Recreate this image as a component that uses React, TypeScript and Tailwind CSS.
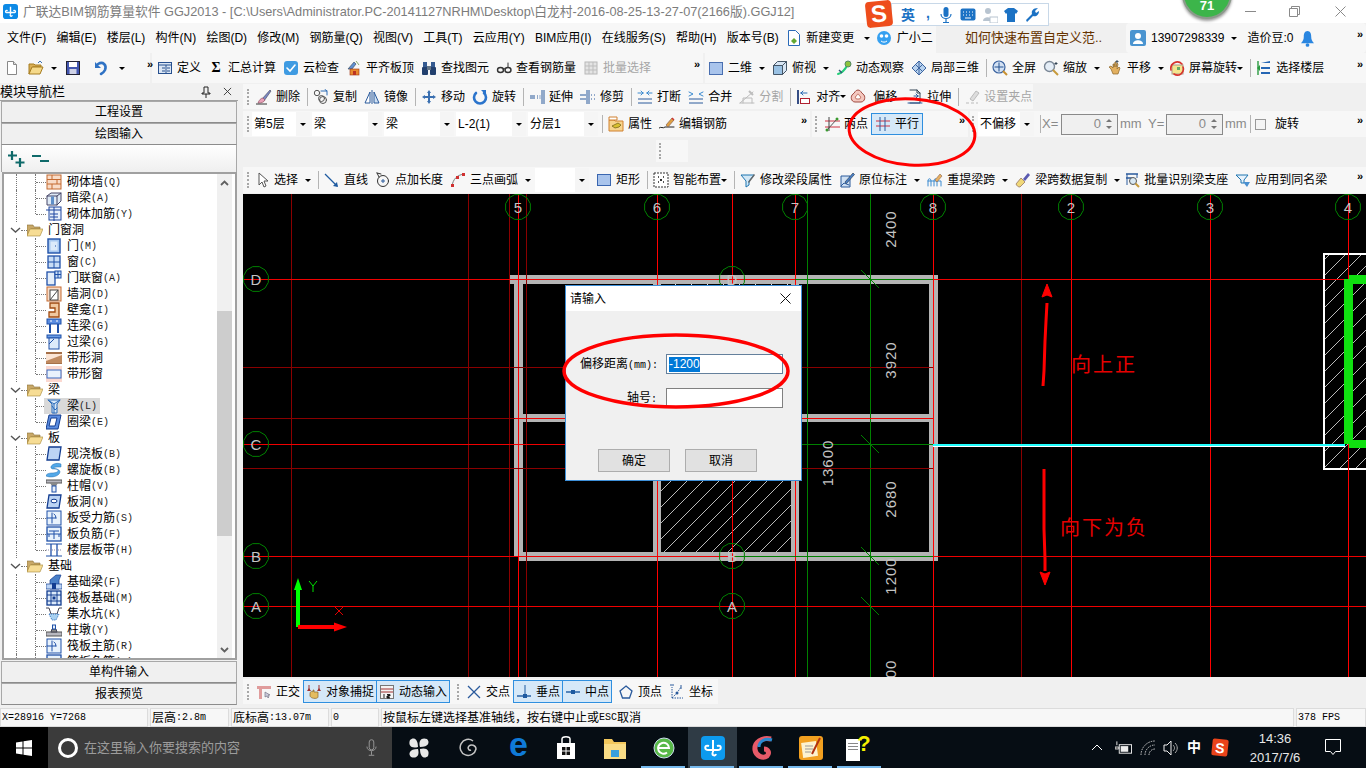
import type { ReactNode } from "react"

const L = { fill: "none", strokeLinecap: "round" as const }

const ICONS: Record<string, ReactNode> = {
  // main toolbar
  new: <><path d="M3.5 1.5h6l3 3v10h-9z" fill="#fff" stroke="#888" /><path d="M9.5 1.5v3h3" fill="#ddd" stroke="#888" /></>,
  open: <><path d="M1 4h5l1 1h6v2H5l-4 7z" fill="#d9ae55" stroke="#a67c20" /><path d="M1 14l3-7h11l-3 7z" fill="#f5d98a" stroke="#a67c20" /><path d="M10 3l2-2 2 2" stroke="#3a70b0" fill="none" /></>,
  save: <><rect x="1.5" y="1.5" width="13" height="13" fill="#4356b0" stroke="#223" /><rect x="4" y="2" width="8" height="5" fill="#fff" /><rect x="4.5" y="9" width="7" height="5" fill="#cfd2e6" /></>,
  undo: <><path d="M4 4c5-3 9 1 7 6-1 2-2 3-4 4" {...L} stroke="#2f72c4" strokeWidth="2.6" /><path d="M1 2v6h6z" fill="#2f72c4" /></>,
  define: <><rect x="1.5" y="2.5" width="13" height="11" fill="#dbe6f4" stroke="#27508f" /><path d="M2 5h12M9 5v8M5 8h3M5 11h3M10 8h3M10 11h3" stroke="#27508f" /></>,
  cloud: <><rect x="1" y="1" width="14" height="14" rx="3" fill="#3f9be2" /><path d="M4 8l3 3 5-6" {...L} stroke="#fff" strokeWidth="1.6" /></>,
  flush: <><path d="M2 9l6-7 2 2-4 5z" fill="#5f8fd0" stroke="#345" strokeWidth=".6" /><rect x="4" y="9" width="9" height="6" fill="#e88a30" stroke="#a03010" strokeWidth=".6" /><path d="M10 1l3 4" stroke="#8a6" /><rect x="7" y="11" width="3" height="4" fill="#b32" /></>,
  find: <><rect x="2" y="2" width="4" height="5" fill="#345a90" /><rect x="10" y="2" width="4" height="5" fill="#345a90" /><rect x="1" y="7" width="6" height="8" rx="1" fill="#22406e" /><rect x="9" y="7" width="6" height="8" rx="1" fill="#22406e" /><rect x="6" y="6" width="4" height="4" fill="#678" /></>,
  look: <><ellipse cx="4.5" cy="10" rx="3" ry="2.5" {...L} stroke="#333" strokeWidth="1.4" /><ellipse cx="12" cy="10" rx="3" ry="2.5" {...L} stroke="#333" strokeWidth="1.4" /><path d="M7 9c1-1 2-1 2 0M12 7V3" {...L} stroke="#333" /></>,
  batch: <><rect x="2" y="2" width="12" height="12" fill="#e4e4e4" stroke="#b8b8b8" /><path d="M2 6h12M2 10h12M6 2v12M10 2v12" stroke="#bdbdbd" /></>,
  d2: <rect x="1.5" y="2.5" width="13" height="12" fill="#a9c4ec" stroke="#4a6fb0" />,
  top: <><path d="M1.5 5.5l4-4h9v9l-4 4h-9z" fill="#d8e6f4" stroke="#456" /><path d="M1.5 5.5h9v9M10.5 5.5l4-4" {...L} stroke="#456" /><rect x="2" y="6" width="8" height="8" fill="#7fb0dc" opacity=".7" /></>,
  orbit: <><path d="M2 14c4-1 8-6 10-10" {...L} stroke="#2c7" strokeWidth="2" /><circle cx="12" cy="4" r="3" fill="#8cc43c" stroke="#586" /><path d="M3 10l3 3" stroke="#357" strokeWidth="1.4" /></>,
  local3d: <><path d="M8 1l7 7-7 7-7-7z" fill="#b8d2ee" stroke="#3c64a0" /><path d="M4.5 4.5l7 7M11.5 4.5l-7 7M8 1v14" stroke="#3c64a0" /></>,
  full: <><circle cx="7" cy="7" r="6" fill="#d4e2f4" stroke="#3c64a0" strokeWidth="1.2" /><path d="M7 2.5v9M2.5 7h9" stroke="#23508f" /><path d="M11 11l4 4" stroke="#c89030" strokeWidth="2" /></>,
  zoom: <><circle cx="6.5" cy="6.5" r="5" fill="#e4edf6" stroke="#7a8796" strokeWidth="1.4" /><path d="M10 10l5 5" stroke="#c79a3c" strokeWidth="2" /><path d="M13 2v3M11.5 3.5h3" stroke="#345" /></>,
  pan: <><path d="M4 9l-2-2 2-1 2 2V4l1 0v3l1-5 1 0v5l1-4 1 1-1 5 2-2 1 1-2 6H6z" fill="#e2b060" stroke="#8a6428" strokeWidth=".7" /><path d="M10 0v3M8.5 1.5h3" stroke="#456" /></>,
  spin: <><rect x="3" y="5" width="11" height="9" fill="#f5e58e" stroke="#a98" /><path d="M2 10a6.500 6.500 0 0 1 11-6" {...L} stroke="#d8322c" strokeWidth="1.6" /><path d="M14 7a6 6 0 0 1-9 7" {...L} stroke="#d8322c" strokeWidth="1.6" /><rect x="8" y="7" width="3" height="3" fill="#6a6" /></>,
  floors: <><path d="M5 3l9-2v2H5zM5 7h9v2H5zM5 12h9v2H5z" fill="#2566b4" /><path d="M1 8l3-3v6z" fill="#2a9a40" /><path d="M2 1v14" stroke="#2a9a40" strokeWidth="1.4" /></>,
  // edit toolbar
  del: <><path d="M6 10L14 1l1 1-7 10z" fill="#7a88c4" stroke="#445" strokeWidth=".6" /><path d="M2 14c1-3 3-5 5-5l2 2c-1 2-3 3-7 3z" fill="#e8a0b8" stroke="#845" strokeWidth=".6" /><path d="M0 15h11" stroke="#333" /></>,
  copy: <><circle cx="4" cy="4" r="2.7" {...L} stroke="#555" /><circle cx="10" cy="11" r="3.5" {...L} stroke="#555" /><circle cx="8.500" cy="9.500" r="3" {...L} stroke="#555" /><path d="M8 2h6l-2-1.500M14 2v4" {...L} stroke="#2f6db5" /></>,
  mirror: <><path d="M1 14L6 3v11z" fill="#fff" stroke="#2a5a9c" /><path d="M15 14L10 3v11z" fill="#cfe0f2" stroke="#2a5a9c" /><path d="M8 1v14" stroke="#2a5a9c" /></>,
  move: <path d="M8 1l2 3H9v3h3V6l3 2-3 2V9H9v3h1l-2 3-2-3h1V9H4v1L1 8l3-2v1h3V4H6z" fill="#3a6fb0" />,
  rotate: <><path d="M4 4a6 6 0 1 0 8 0" {...L} stroke="#2b74cc" strokeWidth="2.600" /><path d="M9 1h5v5z" fill="#2b74cc" /></>,
  extend: <><path d="M13 1v14M15 1v14" stroke="#2a5a9c" /><path d="M1 7h5M1 9h5M8 7h1M8 9h1M10.500 7h1M10.500 9h1" stroke="#2a5a9c" /></>,
  trim: <><path d="M7 1v14M9 1v14" stroke="#2a5a9c" /><path d="M0 6h6M0 10h6M11 6h1M11 10h1M14 6h1M14 10h1" stroke="#2a5a9c" /></>,
  break: <><path d="M1 10h14M1 14h14" stroke="#2a5a9c" /><path d="M1 4h5M6 4L4 2M6 4L4 6M15 4h-5M10 4l2-2M10 4l2 2" {...L} stroke="#3a8ad0" /></>,
  merge: <><path d="M1 10h14M1 14h14" stroke="#2a5a9c" /><path d="M1 3l4 2-4 2M15 3l-4 2 4 2" {...L} stroke="#3a8ad0" /></>,
  split: <><path d="M1 14L14 3M1 14h14M4 14V9h9v5" {...L} stroke="#bcbcbc" /><path d="M10 2l4 4" stroke="#bcbcbc" strokeWidth="2" /></>,
  align: <><path d="M2 1v14" stroke="#203a78" strokeWidth="1.800" /><path d="M5 4h6M5 4l2-2M5 4l2 2" {...L} stroke="#2a6ab4" /><rect x="4.500" y="9.500" width="9" height="5" fill="#fff" stroke="#b02030" /></>,
  offset: <><path d="M8 1c3 0 3 3 5 4 3 2 2 8-2 8H5c-4 0-5-6-2-8 2-1 2-4 5-4z" fill="#f4c8c0" stroke="#a04a40" /><path d="M8 5c1 0 1 2 2 2 1 1 1 3-1 3H7c-2 0-2-2-1-3 1 0 1-2 2-2z" fill="#fff" stroke="#c07060" /></>,
  stretch: <><path d="M3 1h7l3 3v10H3" {...L} stroke="#345" /><path d="M1 14h14M7 7h4M11 7l-2-2M11 7l-2 2" {...L} stroke="#2a5a9c" /><path d="M10 1v3h3" {...L} stroke="#345" /></>,
  grip: <><path d="M2 14h3M7 14h3M12 14h2" stroke="#bbb" /><path d="M6 10l6-8 3 2-6 8z" fill="#ddd" stroke="#bbb" /></>,
  prop: <><path d="M1 4h5l1 1h8v10H1z" fill="#f7d48c" stroke="#d08030" /><path d="M1 1h8v3H1z" fill="#fff" stroke="#d08030" /><path d="M4 10l6-3 3 2-2 2-4 1z" fill="#d8c030" stroke="#6a5a10" strokeWidth=".7" /></>,
  editbar: <><path d="M0 12c2-2 4 1 6-1h9" {...L} stroke="#222" /><path d="M7 9l6-7 2 2-6 7z" fill="#e0a040" stroke="#865" strokeWidth=".7" /><path d="M13 2l2 2" stroke="#c33" strokeWidth="1.400" /></>,
  twopt: <><path d="M1 5h15M1 11h15" stroke="#d03040" /><path d="M3 14L13 3" stroke="#555" /><circle cx="3" cy="14" r="1.500" fill="#3a9a30" /><circle cx="13" cy="3" r="1.500" fill="#3a9a30" /><path d="M5 1v14" stroke="#444" /></>,
  para: <><path d="M1 5h14M1 10h14" stroke="#d03040" /><path d="M5 1v14M10 1v14" stroke="#2a5a9c" /></>,
  // draw toolbar
  pick: <path d="M3 1v12l3-3 2 5 2-1-2-5h4z" fill="#fff" stroke="#555" />,
  line: <><path d="M1 2l12 12" stroke="#1e5aa0" strokeWidth="1.200" /><path d="M14 15l-5-1 4-4z" fill="#1e5aa0" /></>,
  ptlen: <><circle cx="8" cy="9" r="5.500" {...L} stroke="#333" /><path d="M8 7v4M6 9h4" stroke="#2a5a9c" /><path d="M2 1l2 4M2 1l4 1" {...L} stroke="#333" /></>,
  arc: <><path d="M2 14C3 7 7 3 14 2" {...L} stroke="#777" /><rect x="1" y="12" width="3" height="3" fill="#d03030" /><rect x="6" y="4" width="3" height="3" fill="#d03030" /><rect x="12" y="1" width="3" height="3" fill="#d03030" /></>,
  rect: <rect x="1.500" y="2.500" width="13" height="11" fill="#a9c4ec" stroke="#3a66b0" />,
  smart: <><rect x="1" y="1" width="14" height="14" fill="#fff" stroke="#333" strokeDasharray="2 1" /><path d="M5 5h1M10 5h1M5 10h1M10 10h1M8 7v2M7 8h2" stroke="#222" strokeWidth="1.400" /></>,
  modseg: <><path d="M1 3h13l-5 6v4l-3 2V9z" fill="#d3e8f6" stroke="#1d74b0" /><path d="M8 10l6-8 1 1-6 8z" fill="#666" /></>,
  inplace: <><path d="M2 4h9v11H2z" fill="#cfe0f2" stroke="#2a5a9c" /><path d="M2 14l3-3 5 2" {...L} stroke="#2a5a9c" /><path d="M6 10l8-9 1.500 1.500-8 9z" fill="#4a80c8" stroke="#234" strokeWidth=".6" /></>,
  relift: <><path d="M1 14V9c0-3 3-3 3 0v5M7 14V9c0-3 3-3 3 0v5M1 9h13v5" {...L} stroke="#3a8ad0" /><path d="M8 8l5-6 2 2-5 6z" fill="#e8b060" stroke="#865" strokeWidth=".6" /></>,
  brush: <><path d="M1 12l5-6 4 4-5 5c-2 0-3-1-4-3z" fill="#f0d878" stroke="#865" strokeWidth=".7" /><path d="M8 7l5-6 2 2-5 6z" fill="#5a5ab0" /></>,
  batchid: <><path d="M2 2h12M2 6h6" stroke="#2a5a9c" strokeWidth="1.400" /><path d="M3 2v11M13 2v4" stroke="#2a5a9c" /><circle cx="9" cy="9" r="3.500" fill="#d8e8f4" stroke="#555" /><path d="M11.500 11.500l3.500 3.500" stroke="#c79a3c" strokeWidth="2" /></>,
  apply: <><path d="M1 3h12l-4 5v3H6V8z" fill="#e8f2fb" stroke="#1d74b0" /><path d="M8 10h7l-3 5z" fill="#4a90d0" /></>,
  // bottom toolbar
  ortho: <><path d="M1 2h14v3H1zM3 5h3v10H3z" fill="#e09c9c" /><path d="M9 8v5l2-1 1 2 1-1-1-2h2z" fill="#ccd" stroke="#667" strokeWidth=".6" /></>,
  snap: <><path d="M3 1v6M13 1v6" stroke="#a03030" /><path d="M1 7h4L3 4zM11 7h4l-2-3z" fill="#a03030" /><path d="M4 10c0-3 2-3 3-2V6h1v2h4v5c0 2-7 2-8-1z" fill="#e4bc60" stroke="#8a6428" strokeWidth=".7" /></>,
  dyn: <><rect x="1.500" y="1.500" width="13" height="13" fill="#f4f4f4" stroke="#777" /><path d="M2 5h12M2 8h12" stroke="#a03030" /><path d="M5 10v4M8 10.500h3v1.500H8V14h3" stroke="#222" /></>,
  cross: <path d="M2 2l12 12M14 2L2 14" stroke="#2a5a9c" strokeWidth="1.300" />,
  perp: <><path d="M1 12h14" stroke="#1e5aa0" strokeWidth="1.400" /><path d="M9 1v11" stroke="#1e5aa0" /><rect x="7" y="10" width="4" height="4" fill="#1e5aa0" /></>,
  mid: <><path d="M1 8h14" stroke="#1e5aa0" strokeWidth="1.400" /><rect x="6" y="6" width="4" height="4" fill="#1e5aa0" /></>,
  vertex: <path d="M8 2l6 5-2.500 7h-7L2 7z" fill="none" stroke="#2a5a9c" strokeWidth="1.300" />,
  coord: <><path d="M3 14L3 3M3 14h11M3 14l5-5M8 9l4-6" stroke="#2a5a9c" strokeDasharray="1.500 1" /><circle cx="8" cy="9" r="1.500" fill="#2a5a9c" /><path d="M1 1h4M12 1v4" stroke="#2a5a9c" /></>,
}

const TREE_ICONS: Record<string, ReactNode> = {
  brick: <><rect x="1" y="1" width="14" height="14" fill="#f8dcc8" stroke="#c46a30" /><path d="M1 5.500h14M1 10h14M6 1v4.500M11 5.500V10M6 10v5" stroke="#c46a30" /></>,
  hidden: <><path d="M1 6l4-3h10v8l-4 4H1z" fill="#dfeaf6" stroke="#446" /><path d="M1 6h10v9M11 6l4-3" {...L} stroke="#446" /><rect x="5" y="6.500" width="3" height="8" fill="#5f8fc8" /></>,
  rebar: <><rect x="3" y="1" width="12" height="13" fill="#e8f0fa" stroke="#1f46a0" /><path d="M0 4h15M8 1v14M4 8h8M4 11h8" stroke="#1f46a0" /></>,
  door: <><rect x="2" y="1" width="12" height="14" fill="#a8c8f0" stroke="#1f50a8" strokeWidth="1.400" /><rect x="4.500" y="3.500" width="7" height="9" fill="#dceafa" /><path d="M9 8h1" stroke="#1f50a8" /></>,
  win: <><rect x="2" y="2" width="12" height="12" fill="#c8ddf6" stroke="#1f50a8" strokeWidth="1.300" /><path d="M8 2v12M2 8h12" stroke="#1f50a8" /></>,
  doorwin: <><rect x="1" y="2" width="8" height="13" fill="#e4eefa" stroke="#1f50a8" strokeWidth="1.300" /><rect x="9" y="1" width="6" height="7" fill="#c8ddf6" stroke="#1f50a8" /><path d="M12 1v7M9 4.500h6" stroke="#1f50a8" /></>,
  hole: <><rect x="1" y="1" width="14" height="14" fill="#f8dcc8" stroke="#c46a30" /><rect x="4" y="4" width="8" height="10" fill="#fff" stroke="#444" /><path d="M4 14l8-10" stroke="#444" /></>,
  niche: <path d="M4 1h9v14H3v-5h6V6H4z" fill="#f0c8a0" stroke="#a04a10" strokeWidth="1.300" />,
  lian: <><rect x="1" y="1" width="14" height="5" fill="#5a8ce0" stroke="#1f50a8" /><path d="M4 6v9M12 6v9" stroke="#1f50a8" strokeWidth="2" /><path d="M4 3h2M10 3h2" stroke="#fff" /></>,
  guo: <><rect x="1" y="1" width="14" height="3" fill="#6a9ce6" stroke="#1f50a8" /><rect x="3" y="4" width="10" height="11" fill="#dceafa" stroke="#1f50a8" /><path d="M3 10l5-5" stroke="#1f50a8" /></>,
  band: <><rect x="0" y="2" width="16" height="12" fill="#fbe4d4" /><path d="M0 3h16M0 13h16" stroke="#8a4a1a" strokeWidth="1.300" /><path d="M0 11l16-6v8H0z" fill="#c08a60" /></>,
  bandwin: <><rect x="0" y="0" width="16" height="16" fill="#fbd8d0" /><rect x="1" y="4" width="14" height="8" fill="#eaf2fc" stroke="#3a6ac0" /></>,
  beam: <><path d="M2 2h12l-3 4v9H6V6z" fill="#d8e8f8" stroke="#2a6ab8" /><path d="M2 2l6 4 6-4M8 6v9" {...L} stroke="#2a6ab8" /><path d="M6 8l3 4 2-2" {...L} stroke="#2a6ab8" /></>,
  ring: <><path d="M3 1h12l-3 14H0z" fill="#5a8ce0" stroke="#123c90" /><path d="M5 4h6l-2 8H3z" fill="#fff" stroke="#123c90" /></>,
  slab: <path d="M3 1h12l-2 13H1z" fill="#bcd4f4" stroke="#123c90" strokeWidth="1.300" />,
  spiral: <path d="M15 2C10 0 4 3 5 6c1 2 6 0 7 2s-3 3-6 3C3 11 0 12 0 14c4 2 13 1 14-4 0-3-5-3-6-4s3-1 7-1z" fill="#52a8e8" stroke="#2a70b0" strokeWidth=".5" />,
  cap: <><rect x="0" y="2" width="16" height="3" fill="#b8b8c0" stroke="#555" /><path d="M4 5h8l-2 3H6z" fill="#888" /><rect x="6" y="8" width="4" height="6" fill="#e8f0fa" stroke="#1f50a8" /></>,
  slabhole: <><path d="M3 1h12l-2 13H1z" fill="#bcd4f4" stroke="#123c90" strokeWidth="1.300" /><ellipse cx="8" cy="7" rx="3" ry="1.800" fill="#fff" stroke="#123c90" /></>,
  force: <><rect x="1" y="1" width="14" height="14" fill="#e8f2fc" stroke="#1f50a8" /><path d="M1 8h9M10 8a3 4 0 0 0-2-4M6 3v10" {...L} stroke="#1f50a8" /></>,
  neg: <><rect x="1" y="1" width="14" height="14" fill="#e8f2fc" stroke="#1f50a8" strokeWidth="1.300" /><path d="M1 8h14M3 5h10M8 5v8M3 8v3M13 8v3" stroke="#1f50a8" /></>,
  strip: <><path d="M0 2h16M0 14h16" stroke="#1f50a8" /><path d="M5 2v12M11 2v12" stroke="#1f50a8" strokeWidth="1.300" /><path d="M0 8h16" stroke="#88a" strokeDasharray="1 1" /></>,
  fbeam: <><path d="M4 15V6l6-5 5 0-2 5v9z" fill="#4a80c8" stroke="#123c90" strokeWidth=".7" /><path d="M0 15V10h16v5z" fill="#bcd4f4" stroke="#123c90" strokeWidth=".7" /><path d="M6 15V9h4v6z" fill="#123c90" /></>,
  raft: <><rect x="1" y="1" width="14" height="14" fill="#dceafa" stroke="#123c90" strokeWidth="1.300" /><path d="M1 5h14M1 11h14M5 1v14M11 1v14" stroke="#123c90" /><rect x="6.500" y="6.500" width="3" height="3" fill="#123c90" /></>,
  pit: <><path d="M0 2h3l2 6h6l2-6h3" {...L} stroke="#445" /><path d="M3 8h10l-3 6H6z" fill="#a8d0f0" stroke="#2a6ab8" strokeDasharray="1 1" /></>,
  pier: <><rect x="0" y="10" width="16" height="4" fill="#b8b8c0" stroke="#555" /><path d="M5 10l1-3h4l1 3z" fill="#888" stroke="#445" /><rect x="6.500" y="3" width="3" height="4" fill="#e8f0fa" stroke="#1f50a8" /></>,
}

function Ic({ n }: { n: string }) {
  return (
    <svg viewBox="0 0 16 16" className="w-4 h-4 shrink-0">
      {ICONS[n]}
    </svg>
  )
}

function Dd({ tight }: { tight?: boolean }) {
  return <div className={`w-0 h-0 shrink-0 border-t-[3px] border-x-[3px] border-t-black border-x-transparent ${tight ? "-ml-[7px]" : ""}`} />
}

function Tool({ n, t, off, dd, tight }: { n: string; t: string; off?: boolean; dd?: boolean; tight?: boolean }) {
  return (
    <>
      <div className={`flex items-center gap-1 whitespace-nowrap ${off ? "text-[#a6a6a6]" : ""}`}>
        <Ic n={n} />
        <span>{t}</span>
      </div>
      {dd && <Dd tight={tight} />}
    </>
  )
}

function Sep() {
  return <div className="w-px h-[18px] bg-[#b4b4b4] -mr-[2px] shrink-0" />
}

function Handle() {
  return <div className="w-[2px] h-[16px] border-l-2 border-dotted border-[#a8a8a8] shrink-0" />
}

function More() {
  return <span className="text-[11px] leading-none font-bold text-black tracking-[-1px] -translate-y-1 inline-block">»</span>
}

function Combo({ t, w }: { t: string; w: string }) {
  return (
    <div className={`flex h-[24px] bg-white items-center justify-between pl-[2px] shrink-0 ${w}`}>
      <span>{t}</span>
      <div className="w-[14px] h-full bg-[#f5f5f5] flex items-center justify-center">
        <Dd />
      </div>
    </div>
  )
}

function Spin() {
  return (
    <div className="flex items-center justify-end w-[57px] h-[21px] border border-[#8a8a8a] bg-[#f0f0f0] text-[#8a8a8a] shrink-0">
      <span className="text-[13px]">0</span>
      <div className="w-[16px] flex flex-col items-center gap-[4px]">
        <div className="w-0 h-0 border-b-[3px] border-x-[3px] border-b-[#777] border-x-transparent" />
        <div className="w-0 h-0 border-t-[3px] border-x-[3px] border-t-[#777] border-x-transparent" />
      </div>
    </div>
  )
}

type Row = { p?: string; t?: string; k?: string; i?: string; last?: boolean; sel?: boolean }

const TREE: Row[] = [
  { t: "砌体墙", k: "Q", i: "brick" },
  { t: "暗梁", k: "A", i: "hidden" },
  { t: "砌体加筋", k: "Y", i: "rebar", last: true },
  { p: "门窗洞" },
  { t: "门", k: "M", i: "door" },
  { t: "窗", k: "C", i: "win" },
  { t: "门联窗", k: "A", i: "doorwin" },
  { t: "墙洞", k: "D", i: "hole" },
  { t: "壁龛", k: "I", i: "niche" },
  { t: "连梁", k: "G", i: "lian" },
  { t: "过梁", k: "G", i: "guo" },
  { t: "带形洞", i: "band" },
  { t: "带形窗", i: "bandwin", last: true },
  { p: "梁" },
  { t: "梁", k: "L", i: "beam", sel: true },
  { t: "圈梁", k: "E", i: "ring", last: true },
  { p: "板" },
  { t: "现浇板", k: "B", i: "slab" },
  { t: "螺旋板", k: "B", i: "spiral" },
  { t: "柱帽", k: "V", i: "cap" },
  { t: "板洞", k: "N", i: "slabhole" },
  { t: "板受力筋", k: "S", i: "force" },
  { t: "板负筋", k: "F", i: "neg" },
  { t: "楼层板带", k: "H", i: "strip", last: true },
  { p: "基础" },
  { t: "基础梁", k: "F", i: "fbeam" },
  { t: "筏板基础", k: "M", i: "raft" },
  { t: "集水坑", k: "K", i: "pit" },
  { t: "柱墩", k: "Y", i: "pier" },
  { t: "筏板主筋", k: "R", i: "force" },
  { t: "筏板负筋", k: "F", i: "neg" },
]

function TreeRow({ r }: { r: Row }) {
  if (r.p) {
    return (
      <div className="flex h-4 items-center">
        <div className="w-[6px]" />
        <svg viewBox="0 0 11 6" className="w-[11px] h-[6px] shrink-0">
          <path d="M1 1l4.500 4L10 1" fill="none" stroke="#555" strokeWidth="1.400" />
        </svg>
        <div className="w-[6px] border-t border-dotted border-[#777]" />
        <svg viewBox="0 0 16 16" className="w-4 h-4 shrink-0">
          <path d="M0 3h6l1 2h6v2H4l-4 7z" fill="#c8a868" stroke="#8a7038" strokeWidth=".6" />
          <path d="M0 14l3-7h13l-3 7z" fill="#f6dc94" stroke="#a68838" strokeWidth=".6" />
        </svg>
        <span className="ml-[5px] text-[12px]">{r.p}</span>
      </div>
    )
  }
  return (
    <div className="flex h-4 items-stretch">
      <div className="w-[12px]" />
      <div className="w-[19px] border-l border-dotted border-[#777]" />
      <div className={`w-[11px] border-l border-dotted border-[#777] ${r.last ? "h-[8px]" : ""}`}>
        <div className="mt-[8px] border-t border-dotted border-[#777]" />
      </div>
      <div className={`flex items-center h-4 -ml-[2px] pl-[2px] pr-[3px] ${r.sel ? "bg-[#d9d9d9]" : ""}`}>
        <svg viewBox="0 0 16 16" className="w-4 h-4 shrink-0">
          {TREE_ICONS[r.i!]}
        </svg>
        <span className="ml-[5px] text-[12px] whitespace-nowrap">{r.t}</span>
        {r.k && <span className="font-['Liberation_Mono'] text-[10px] text-[#222]">({r.k})</span>}
      </div>
    </div>
  )
}

function SideBtn({ t }: { t: string }) {
  return (
    <div className="h-[22px] mx-px flex items-center justify-center bg-[#f0f0f0] border border-[#a8a8a8] border-b-[#8c8c8c] text-[12px]">
      {t}
    </div>
  )
}

function Sidebar() {
  return (
    <div className="w-[238px] mr-[2px] flex flex-col shrink-0">
      <div className="h-[18px] flex items-center justify-between border-b border-[#a0a0a0] text-[13px] leading-none pr-[6px] bg-[#f0f0f0]">
        <span>模块导航栏</span>
        <div className="flex items-center gap-[12px]">
          <svg viewBox="0 0 10 12" className="w-[10px] h-[12px]">
            <path d="M3 1h4v6h2v1H1V7h2zM5 8v4" fill="none" stroke="#222" />
          </svg>
          <svg viewBox="0 0 10 10" className="w-[9px] h-[9px]">
            <path d="M1 1l8 8M9 1l-8 8" stroke="#333" />
          </svg>
        </div>
      </div>
      <SideBtn t="工程设置" />
      <SideBtn t="绘图输入" />
      <div className="h-[27px] mx-px flex items-center pl-[6px] gap-[7px] bg-gradient-to-b from-white to-[#efefef] border-x border-[#a8a8a8]">
        <svg viewBox="0 0 17 16" className="w-[17px] h-4">
          <path d="M4 0v9M0 4.500h9M12 7v9M7.500 11.500h9" stroke="#0f6a6a" strokeWidth="2.200" />
        </svg>
        <svg viewBox="0 0 17 16" className="w-[17px] h-4">
          <path d="M0 5h9M8 10h9" stroke="#0f6a6a" strokeWidth="2.200" />
        </svg>
      </div>
      <div className="h-[488px] ml-[2px] mr-px border-2 border-[#a0a0a0] bg-white flex overflow-hidden">
        <div className="flex-1 overflow-hidden">
          {TREE.map((r, i) => (
            <TreeRow key={i} r={r} />
          ))}
        </div>
        <div className="w-[15px] mr-[3px] shrink-0 bg-[#f0f0f0] flex flex-col items-center">
          <div className="h-[17px] flex items-center">
            <svg viewBox="0 0 9 6" className="w-[9px] h-[6px]">
              <path d="M1 5l3.500-3.500L8 5" fill="none" stroke="#606060" strokeWidth="1.800" />
            </svg>
          </div>
          <div className="w-full h-[225px] mt-[120px] bg-[#cdcdcd]" />
          <div className="flex-1" />
          <div className="h-[17px] flex items-center">
            <svg viewBox="0 0 9 6" className="w-[9px] h-[6px]">
              <path d="M1 1l3.500 3.500L8 1" fill="none" stroke="#606060" strokeWidth="1.800" />
            </svg>
          </div>
        </div>
      </div>
      <div className="h-px" />
      <SideBtn t="单构件输入" />
      <SideBtn t="报表预览" />
    </div>
  )
}

// twelve sided axis bubble, the CAD view draws them as polygons
function Bubble({ x, y, t }: { x: number; y: number; t: string }) {
  const pts = Array.from({ length: 12 }, (_, i) => {
    const a = (i * Math.PI) / 6 + Math.PI / 12
    return `${x + 12.8 * Math.cos(a)},${y + 12.8 * Math.sin(a)}`
  }).join(" ")
  return (
    <>
      <polygon points={pts} fill="none" stroke="#008000" />
      <text x={x} y={y + 5.500} textAnchor="middle" fontSize="15" fontFamily="Liberation Sans" fill="#c4c4c4">
        {t}
      </text>
    </>
  )
}

function Dim({ x, y, t }: { x: number; y: number; t: string }) {
  return (
    <text
      transform={`translate(${x} ${y}) rotate(-90)`}
      textAnchor="middle"
      fontSize="15"
      letterSpacing="1"
      fontFamily="Liberation Sans"
      fill="#c4c4c4"
    >
      {t}
    </text>
  )
}

function Canvas() {
  const dark = [291, 468, 509, 526, 1021]
  const bright = [518, 657, 732, 795, 933, 1071, 1210, 1348]
  const walls: number[][] = [
    [510, 275, 428, 9],
    [514, 275, 9, 281],
    [929, 275, 9, 286],
    [519, 552, 419, 9],
    [514, 414, 139, 8],
    [799, 414, 130, 8],
    [653, 284, 8, 268],
    [791, 284, 8, 268],
  ]
  return (
    <div className="h-[483px] ml-[3px] bg-black overflow-hidden">
      <svg viewBox="243 194 1123 483" className="w-[1123px] h-[483px] block">
        <defs>
          <pattern id="hatch" width="16" height="16" patternUnits="userSpaceOnUse">
            <path d="M-2 18L18 -2M-2 2L2 -2M14 18L18 14" stroke="#e8e8e8" strokeWidth=".8" />
          </pattern>
        </defs>
        <g shapeRendering="crispEdges">
          <rect x="657" y="281" width="138" height="274" fill="url(#hatch)" stroke="#fff" />
          <rect x="1324" y="254" width="60" height="215" fill="url(#hatch)" stroke="#fff" strokeWidth="2" />
          {walls.map((w, i) => (
            <rect key={i} x={w[0]} y={w[1]} width={w[2]} height={w[3]} fill="#b4b4b4" />
          ))}
          <rect x="661" y="284" width="130" height="3" fill="url(#hatch)" />
          {dark.map((x) => (
            <path key={x} d={`M${x} 194V677`} stroke="#8a0000" transform="translate(.5 0)" />
          ))}
          {bright.map((x) => (
            <path key={x} d={`M${x} 194V677`} stroke="#ff0000" transform="translate(.5 0)" />
          ))}
          <path d="M807.500 194V677M870.500 194V677" stroke="#008000" />
          <path d="M243 367.500H933M243 418.500H515M243 468.500H933" stroke="#8a0000" />
          <path d="M515 418.500H933M243 279.500H1366M243 444.500H933M243 556.500H1366M243 606.500H1366" stroke="#f00000" />
          <path d="M795 279.500H933M795 444.500H933M735 556.500H933" stroke="#008000" />
          <path d="M933 444.500H1345" stroke="#20ffff" strokeWidth="2" />
          <path d="M933 446H1345" stroke="#fff" />
          <rect x="1344" y="279" width="9" height="165" fill="#10e010" />
          <rect x="1349" y="275" width="17" height="9" fill="#10e010" />
          <rect x="1349" y="440" width="17" height="8" fill="#10e010" />
        </g>
        <path d="M861 270l18 18M861 435l18 18M861 547l18 18M861 597l18 18" stroke="#008000" />
        <rect x="296" y="590" width="4" height="37" fill="#00ff00" />
        <path d="M298 578l4 12h-8z" fill="#00ff00" />
        <path d="M309 581l4 5 4-5M313 586v6" fill="none" stroke="#00e000" />
        <rect x="298" y="625" width="36" height="4" fill="#ff0000" />
        <path d="M347 627l-13 4.500v-9z" fill="#ff0000" />
        <path d="M335 607l8 8M343 607l-8 8" stroke="#e00000" />
        {[
          [518, 207, "5"],
          [657, 207, "6"],
          [795, 207, "7"],
          [933, 207, "8"],
          [1071, 207, "2"],
          [1210, 207, "3"],
          [1348, 207, "4"],
          [256, 279, "D"],
          [256, 444, "C"],
          [256, 556, "B"],
          [256, 606, "A"],
          [732, 279, "D"],
          [732, 556, "B"],
          [732, 606, "A"],
        ].map((b) => (
          <Bubble key={`${b[0]}-${b[1]}`} x={b[0] as number} y={b[1] as number} t={b[2] as string} />
        ))}
        <Dim x={896} y={229} t="2400" />
        <Dim x={896} y={360} t="3920" />
        <Dim x={896} y={499} t="2680" />
        <Dim x={896} y={576} t="1200" />
        <Dim x={896} y={669} t="00" />
        <Dim x={833} y={463} t="13600" />
        <path d="M1043 386l1-15 1-30 1-20 1-18" fill="none" stroke="#f00" strokeWidth="3" />
        <path d="M1047 284l5 13-5-2-5 2z" fill="#f00" stroke="#f00" />
        <path d="M1044 469v60l1 30v12" fill="none" stroke="#f00" strokeWidth="3" />
        <path d="M1045 585l-5-13 5 2 5-2z" fill="#f00" stroke="#f00" />
        <text x="1071" y="372" fontSize="20" letterSpacing="2" fontFamily="Noto Sans CJK SC" fill="#e60000">
          向上正
        </text>
        <text x="1060" y="535" fontSize="20" letterSpacing="2" fontFamily="Noto Sans CJK SC" fill="#e60000">
          向下为负
        </text>
      </svg>
    </div>
  )
}

function Dialog() {
  return (
    <div className="absolute left-[565px] top-[285px] w-[237px] h-[196px] border border-[#3d8fd8] bg-[#f0f0f0] flex flex-col text-[12px]">
      <div className="h-[25px] bg-white flex items-center justify-between pl-[4px] pr-[10px] shrink-0">
        <span>请输入</span>
        <svg viewBox="0 0 11 11" className="w-[11px] h-[11px]">
          <path d="M.5 .5l10 10M10.500 .5l-10 10" stroke="#111" />
        </svg>
      </div>
      <div className="mt-[43px] flex items-center justify-end pr-[18px] h-[20px]">
        <span className="mr-[8px]">
          偏移距离<span className="font-['Liberation_Mono'] text-[10px]">(mm):</span>
        </span>
        <div className="w-[117px] h-[20px] bg-white border border-[#64809c] flex items-center pl-[2px]">
          <span className="bg-[#0078d7] text-white leading-[15px] text-[12px]">-1200</span>
        </div>
      </div>
      <div className="mt-[14px] flex items-center justify-end pr-[18px] h-[20px]">
        <span className="mr-[9px]">
          轴号<span className="font-['Liberation_Mono'] text-[10px]">:</span>
        </span>
        <div className="w-[117px] h-[20px] bg-white border border-[#808080]" />
      </div>
      <div className="mt-[41px] flex pl-[32px] gap-[15px]">
        <div className="w-[72px] h-[23px] bg-[#e1e1e1] border border-[#adadad] flex items-center justify-center">确定</div>
        <div className="w-[72px] h-[23px] bg-[#e1e1e1] border border-[#adadad] flex items-center justify-center">取消</div>
      </div>
    </div>
  )
}

function Sogou() {
  return (
    <div className="absolute left-[866px] top-0 flex items-start">
      <div className="w-[26px] h-[26px] mt-px bg-[#ee4d1c] rounded-[4px] -rotate-6 flex items-center justify-center text-white text-[24px] font-bold leading-none font-['Liberation_Sans'] z-10">
        S
      </div>
      <div className="w-[158px] h-[23px] mt-[3px] -ml-px bg-white border border-[#c8d8e8] flex items-center text-[#1c72c4]">
        <span className="ml-[9px] font-bold text-[14px] leading-none">英</span>
        <span className="ml-[11px] font-bold text-[14px] leading-none -translate-y-[2px]">,</span>
        <svg viewBox="0 0 12 16" className="ml-[10px] w-[12px] h-4">
          <rect x="3.500" y="0" width="5" height="10" rx="2.500" fill="#1c72c4" />
          <path d="M1 7c0 6 10 6 10 0M6 12v4M3 15.500h6" fill="none" stroke="#1c72c4" strokeWidth="1.200" />
        </svg>
        <svg viewBox="0 0 16 13" className="ml-[8px] w-4 h-[13px]">
          <rect x=".5" y=".5" width="15" height="12" rx="2" fill="#1c72c4" />
          <path d="M3 4h1M6 4h1M9 4h1M12 4h1M3 7h1M6 7h1M9 7h1M12 7h1M5 10h6" stroke="#fff" />
        </svg>
        <svg viewBox="0 0 16 16" className="ml-[6px] w-4 h-4">
          <circle cx="6" cy="4" r="3" fill="#b8c4d0" />
          <path d="M1 14c0-5 9-5 9 0z" fill="#b8c4d0" />
          <rect x="8" y="10" width="8" height="6" fill="#fff" stroke="#b8c4d0" />
        </svg>
        <svg viewBox="0 0 14 16" className="ml-[6px] w-[14px] h-4">
          <path d="M4 1h6l4 3-2 3-1-1v9H3V6L2 7 0 4z" fill="#1c72c4" />
        </svg>
        <svg viewBox="0 0 14 16" className="ml-[7px] w-[14px] h-4">
          <path d="M2 15l-1-2 6-6c-1-3 1-6 6-6L10 4l1 2 3-2c0 4-3 6-6 5z" fill="#1c72c4" />
        </svg>
      </div>
    </div>
  )
}

function TitleBar() {
  return (
    <div className="h-[23px] bg-white flex items-center text-[12.75px] text-[#7c7c7c] relative shrink-0">
      <svg viewBox="0 0 16 16" className="w-[15px] h-[15px] ml-[3px]">
        <rect width="16" height="16" rx="3" fill="#0d8ae6" />
        <path d="M8 3v8M5 7c-3-1-3 3 0 2h6c3 1 3-3 0-2M8 11c-1 2 1 3 2 1" fill="none" stroke="#fff" strokeWidth="1.500" />
      </svg>
      <span className="ml-[5px] whitespace-nowrap">
        广联达BIM钢筋算量软件 GGJ2013 - [C:\Users\Administrator.PC-20141127NRHM\Desktop\白龙村-2016-08-25-13-27-07(2166版).GGJ12]
      </span>
      <div className="absolute right-0 top-0 h-[23px] flex items-center text-[#8a8a8a]">
        <div className="w-[11px] h-px bg-[#8a8a8a] mr-[33px]" />
        <svg viewBox="0 0 11 11" className="w-[11px] h-[11px] mr-[35px]">
          <path d="M.5 2.500h8v8h-8zM2.500 2.500v-2h8v8h-2" fill="none" stroke="#8a8a8a" />
        </svg>
        <svg viewBox="0 0 11 11" className="w-[11px] h-[11px] mr-[20px]">
          <path d="M.5 .5l10 10M10.500 .5l-10 10" stroke="#8a8a8a" />
        </svg>
      </div>
    </div>
  )
}

function MenuBar() {
  const items = ["文件(F)", "编辑(E)", "楼层(L)", "构件(N)", "绘图(D)", "修改(M)", "钢筋量(Q)", "视图(V)", "工具(T)", "云应用(Y)", "BIM应用(I)", "在线服务(S)", "帮助(H)", "版本号(B)"]
  return (
    <div className="h-[30px] flex items-center bg-[#f0f0f0] text-[12px] shrink-0">
      <div className="w-[936px] h-full bg-[#f7f7f7] flex items-center pl-[7px] gap-[10.2px] whitespace-nowrap">
        {items.map((m) => (
          <span key={m}>{m}</span>
        ))}
        <svg viewBox="0 0 14 18" className="w-[14px] h-[18px] shrink-0 -ml-[2px]">
          <path d="M1.500 1.500h7l4 4v11h-11z" fill="#fff" stroke="#2a6ab8" />
          <path d="M7 9l3 3-3 3-3-3z" fill="#62a832" />
        </svg>
        <span className="-ml-[5px]">新建变更</span>
        <Dd />
        <svg viewBox="0 0 16 16" className="w-4 h-4 shrink-0 -ml-[5px]">
          <circle cx="8" cy="8" r="7" fill="#36a0f0" />
          <circle cx="5.500" cy="6" r="1.800" fill="#fff" />
          <circle cx="10.500" cy="6" r="1.800" fill="#fff" />
          <path d="M5 11c2 1.500 4 1.500 6 0" fill="none" stroke="#fff" />
        </svg>
        <span className="-ml-[5px]">广小二</span>
      </div>
      <div className="w-[189px] h-full flex items-center pl-[29px] text-[#663300] text-[13px] whitespace-nowrap">如何快速布置自定义范..</div>
      <div className="flex-1 h-full bg-[#f7f7f7] rounded-sm flex items-center pl-[4px] ml-[1px] whitespace-nowrap">
        <svg viewBox="0 0 16 16" className="w-4 h-4 shrink-0">
          <rect width="16" height="16" rx="2" fill="#4a94d0" />
          <circle cx="8" cy="6" r="3" fill="#fff" />
          <path d="M3 14c0-5 10-5 10 0z" fill="#fff" />
        </svg>
        <span className="ml-[5px]">13907298339</span>
        <div className="ml-[7px]"><Dd /></div>
        <span className="ml-[10px]">造价豆:0</span>
        <svg viewBox="0 0 14 18" className="ml-[8px] w-[13px] h-[17px]">
          <path d="M7 1c3 0 4 3 4 6 0 3 1 5 3 7H0c2-2 3-4 3-7 0-3 1-6 4-6z" fill="#2a86e0" />
          <circle cx="7" cy="16" r="2" fill="#2a86e0" />
        </svg>
        <div className="flex-1" />
        <div className="mr-[4px]"><More /></div>
      </div>
    </div>
  )
}

function MainBar() {
  return (
    <div className="h-[30px] flex text-[12px] shrink-0">
      <div className="w-[150px] h-full bg-[#f7f7f7] flex items-center pl-[4px]">
        <Ic n="new" />
        <div className="ml-[8px]"><Ic n="open" /></div>
        <div className="ml-[7px]"><Dd /></div>
        <div className="ml-[8px]"><Ic n="save" /></div>
        <div className="w-px h-[20px] bg-[#bbb] ml-[5px]" />
        <div className="ml-[8px]"><Ic n="undo" /></div>
        <div className="ml-[9px]"><Dd /></div>
        <div className="ml-[22px]"><More /></div>
      </div>
      <div className="w-[551px] ml-[2px] h-full bg-[#f7f7f7] flex items-center pl-[5px] gap-[7px]">
        <Tool n="define" t="定义" />
        <div className="flex items-center gap-1">
          <span className="w-4 text-center font-bold text-[14px] leading-none font-['Liberation_Serif']">Σ</span>
          <span>汇总计算</span>
        </div>
        <Tool n="cloud" t="云检查" />
        <Tool n="flush" t="平齐板顶" />
        <Tool n="find" t="查找图元" />
        <Tool n="look" t="查看钢筋量" />
        <Tool n="batch" t="批量选择" off />
        <div className="flex-1" />
        <div className="mr-[4px]"><More /></div>
      </div>
      <div className="flex-1 ml-[2px] h-full bg-[#f7f7f7] flex items-center pl-[3px] gap-[7px]">
        <Tool n="d2" t="二维" dd />
        <Tool n="top" t="俯视" dd />
        <Tool n="orbit" t="动态观察" />
        <Tool n="local3d" t="局部三维" />
        <Sep />
        <Tool n="full" t="全屏" />
        <Tool n="zoom" t="缩放" dd />
        <Tool n="pan" t="平移" dd />
        <div className="-ml-[2px]"><Ic n="spin" /></div>
        <span className="-ml-[3px] whitespace-nowrap">屏幕旋转</span>
        <Dd tight />
        <Sep />
        <Tool n="floors" t="选择楼层" />
        <div className="flex-1" />
        <div className="mr-[4px]"><More /></div>
      </div>
    </div>
  )
}

function EditRow() {
  return (
    <div className="h-[27px] pl-[3px]">
      <div className="w-[790px] h-[25px] mt-px bg-[#f7f7f7] flex items-center pl-[4px] gap-[7px]">
        <Handle />
        <Tool n="del" t="删除" />
        <Sep />
        <Tool n="copy" t="复制" />
        <Tool n="mirror" t="镜像" />
        <Sep />
        <Tool n="move" t="移动" />
        <Tool n="rotate" t="旋转" />
        <Sep />
        <Tool n="extend" t="延伸" />
        <Tool n="trim" t="修剪" />
        <Sep />
        <Tool n="break" t="打断" />
        <Tool n="merge" t="合并" />
        <Tool n="split" t="分割" off />
        <Sep />
        <Tool n="align" t="对齐" dd tight />
        <div className="-ml-[3px]"><Ic n="offset" /></div>
        <span className="whitespace-nowrap">偏移</span>
        <div className="ml-[3px]"><Tool n="stretch" t="拉伸" /></div>
        <Sep />
        <Tool n="grip" t="设置夹点" off />
      </div>
    </div>
  )
}

function PropRow() {
  return (
    <div className="h-[27px] pl-[3px] flex pt-px">
      <div className="w-[567px] h-[26px] bg-[#f7f7f7] flex items-center pl-[4px]">
        <Handle />
        <div className="flex items-center gap-[2px] ml-[3px]">
          <Combo t="第5层" w="w-[58px]" />
          <Combo t="梁" w="w-[70px]" />
          <Combo t="梁" w="w-[70px]" />
          <Combo t="L-2(1)" w="w-[70px]" />
          <Combo t="分层1" w="w-[70px]" />
        </div>
        <div className="flex items-center gap-[7px] ml-[4px]">
          <Sep />
          <Tool n="prop" t="属性" />
          <Tool n="editbar" t="编辑钢筋" />
        </div>
        <div className="flex-1" />
        <div className="mr-[4px]"><More /></div>
      </div>
      <div className="w-[156px] h-[26px] ml-[2px] bg-[#f7f7f7] flex items-center pl-[3px] gap-[7px]">
        <Handle />
        <Tool n="twopt" t="两点" />
        <div className="h-[22px] -ml-[4px] px-[3px] bg-[#d5e8f8] border border-[#2f8fdf] flex items-center">
          <Tool n="para" t="平行" />
        </div>
        <div className="flex-1" />
        <div className="mr-[4px]"><More /></div>
      </div>
      <div className="flex-1 h-[26px] ml-[2px] bg-[#f7f7f7] flex items-center pl-[2px]">
        <Handle />
        <div className="ml-[4px]"><Combo t="不偏移" w="w-[56px]" /></div>
        <div className="w-px h-[18px] bg-[#b4b4b4] ml-[6px]" />
        <span className="ml-[1px] text-[#8a8a8a] text-[13px] w-[19px]">X=</span>
        <Spin />
        <span className="ml-[2px] text-[#8a8a8a] text-[13px] w-[28px]">mm</span>
        <span className="text-[#8a8a8a] text-[13px] w-[18px]">Y=</span>
        <Spin />
        <span className="ml-[2px] text-[#8a8a8a] text-[13px] w-[25px]">mm</span>
        <div className="w-px h-[18px] bg-[#b4b4b4]" />
        <div className="w-[11px] h-[11px] border border-[#999] ml-[4px] bg-[#f4f4f4]" />
        <span className="ml-[9px]">旋转</span>
        <div className="flex-1" />
        <div className="mr-[4px]"><More /></div>
      </div>
    </div>
  )
}

function EmptyRow() {
  return (
    <div className="h-[28px] pl-[416px] flex items-center">
      <div className="w-[32px] h-[22px] bg-[#f7f7f7] flex items-center pl-[3px]">
        <Handle />
      </div>
    </div>
  )
}

function DrawRow() {
  return (
    <div className="h-[28px] pl-[3px]">
      <div className="h-[26px] mt-[2px] bg-[#f7f7f7] flex items-center pl-[4px] gap-[7px] whitespace-nowrap">
        <Handle />
        <div className="-mr-[5px]"><Ic n="pick" /></div>
        <span>选择</span>
        <Dd />
        <Sep />
        <Tool n="line" t="直线" />
        <Tool n="ptlen" t="点加长度" />
        <Tool n="arc" t="三点画弧" dd />
        <div className="-ml-[3px]"><Combo t="" w="w-[54px]" /></div>
        <Tool n="rect" t="矩形" />
        <Sep />
        <Tool n="smart" t="智能布置" dd tight />
        <Sep />
        <Tool n="modseg" t="修改梁段属性" />
        <Tool n="inplace" t="原位标注" dd />
        <Tool n="relift" t="重提梁跨" dd />
        <Tool n="brush" t="梁跨数据复制" dd />
        <div className="-ml-[3px]"><Tool n="batchid" t="批量识别梁支座" /></div>
        <Tool n="apply" t="应用到同名梁" />
        <div className="flex-1" />
        <div className="mr-[4px]"><More /></div>
      </div>
    </div>
  )
}

function Toggle({ n, t }: { n: string; t: string }) {
  return (
    <div className="h-[23px] px-[2px] bg-[#d5e8f8] border border-[#2f8fdf] flex items-center gap-1 whitespace-nowrap -ml-px">
      <Ic n={n} />
      <span>{t}</span>
    </div>
  )
}

function BottomRow() {
  return (
    <div className="h-[29px] pl-[3px] flex items-center">
      <div className="h-[25px] w-[475px] bg-[#f7f7f7] flex items-center pl-[4px] gap-[7px]">
        <Handle />
        <Tool n="ortho" t="正交" />
        <div className="flex items-center gap-0 -ml-[3px]">
          <Toggle n="snap" t="对象捕捉" />
          <Toggle n="dyn" t="动态输入" />
        </div>
        <Handle />
        <Tool n="cross" t="交点" />
        <div className="flex items-center -ml-[3px]">
          <Toggle n="perp" t="垂点" />
          <Toggle n="mid" t="中点" />
        </div>
        <div className="-ml-px"><Tool n="vertex" t="顶点" /></div>
        <Tool n="coord" t="坐标" />
      </div>
    </div>
  )
}

function StatusBar() {
  const mono = "font-['Liberation_Mono'] text-[10px]"
  const cell = "h-full bg-[#f7f7f7] border border-[#dcdcdc] flex items-center pl-[1px]"
  return (
    <div className="h-[21px] pt-[2px] flex gap-[2px] bg-[#f0f0f0] text-[12px] shrink-0 whitespace-nowrap">
      <div className={`w-[148px] ${cell} ${mono}`}>X=28916 Y=7268</div>
      <div className={`w-[79px] ${cell}`}>层高<span className={mono}>:2.8m</span></div>
      <div className={`w-[98px] ${cell}`}>底标高<span className={mono}>:13.07m</span></div>
      <div className={`w-[48px] ${cell} ${mono}`}>0</div>
      <div className={`flex-1 ${cell}`}>
        按鼠标左键选择基准轴线，按右键中止或<span className={mono}>ESC</span>取消
      </div>
      <div className={`w-[70px] ${cell} ${mono}`}>378 FPS</div>
    </div>
  )
}

function Task({ on, active, children }: { on?: boolean; active?: boolean; children: ReactNode }) {
  return (
    <div className={`w-[49px] h-full flex flex-col items-center justify-center relative ${active ? "bg-[#2f3b45]" : ""}`}>
      {children}
      {on && <div className="absolute bottom-0 left-[2px] right-[3px] h-[2px] bg-[#76b9ed]" />}
    </div>
  )
}

function Taskbar() {
  return (
    <div className="h-[41px] bg-[#060d14] flex items-stretch text-white shrink-0">
      <div className="w-[48px] bg-black flex items-center justify-center">
        <svg viewBox="0 0 16 16" className="w-4 h-4">
          <path d="M0 2.500l6.500-1V7.500H0zM7.500 1.300L16 0v7.500H7.500zM0 8.500h6.500v6L0 13.500zM7.500 8.500H16V16l-8.500-1.300z" fill="#fff" />
        </svg>
      </div>
      <div className="w-[344px] bg-[#3b3b3b] flex items-center pl-[10px] text-[#9c9c9c] text-[13px]">
        <div className="w-[20px] h-[20px] rounded-full border-[3px] border-white" />
        <span className="ml-[6px]">在这里输入你要搜索的内容</span>
        <div className="flex-1" />
        <svg viewBox="0 0 12 18" className="w-[11px] h-[17px] mr-[15px]">
          <rect x="3.500" y=".5" width="5" height="11" rx="2.500" fill="none" stroke="#9c9c9c" />
          <path d="M1 8c0 6 10 6 10 0M6 13v4M3 17.500h6" fill="none" stroke="#9c9c9c" />
        </svg>
      </div>
      <div className="flex ml-[2px]">
        <Task>
          <svg viewBox="0 0 22 22" className="w-[22px] h-[22px]">
            <path d="M10 10C3 12 0 8 2 3c3-3 8-2 8 7zM12 10C10 3 14 0 19 2c3 3 2 8-7 8zM12 12c7-2 10 2 8 7-3 3-8 2-8-7zM10 12c2 7-2 10-7 8-3-3-2-8 7-8z" fill="#e8e8e8" />
          </svg>
        </Task>
        <Task>
          <svg viewBox="0 0 20 20" className="w-5 h-5">
            <path d="M15 3A8 8 0 1 0 18 11c0-4-5-5-7-3-2 2 0 5 2 4" fill="none" stroke="#c4c4c4" strokeWidth="1.500" />
          </svg>
        </Task>
        <Task>
          <span className="text-[#0f7ad8] text-[34px] font-bold leading-none -translate-y-[4px] translate-x-[2px] font-['Liberation_Sans']">e</span>
        </Task>
        <Task>
          <svg viewBox="0 0 20 24" className="w-5 h-6">
            <path d="M1 7h18v16H1z" fill="#fff" />
            <path d="M6 7V3c0-3 8-3 8 0v4" fill="none" stroke="#fff" strokeWidth="1.500" />
            <path d="M6 11h3.500v3.500H6zM10.500 11H14v3.500h-3.500zM6 15.500h3.500V19H6zM10.500 15.500H14V19h-3.500z" fill="#111" />
          </svg>
        </Task>
        <Task>
          <svg viewBox="0 0 22 22" className="w-[22px] h-[22px]">
            <path d="M0 2h8l2 3h12v17H0z" fill="#f2c75c" />
            <rect y="7" width="22" height="15" fill="#f9dc86" />
            <rect x="7" y="13" width="8" height="7" fill="#3aa0dc" />
          </svg>
        </Task>
        <Task on>
          <svg viewBox="0 0 22 22" className="w-[22px] h-[22px]">
            <circle cx="11" cy="11" r="10" fill="#58b848" stroke="#cde" />
            <path d="M5 11h11a5.500 5.500 0 1 0-2 4.500" fill="none" stroke="#fff" strokeWidth="2" />
          </svg>
        </Task>
        <Task on active>
          <svg viewBox="0 0 24 24" className="w-6 h-6">
            <rect width="24" height="24" rx="4" fill="#0d9aee" />
            <path d="M12 4v12M8 10c-5-2-5 5 0 4h8c5 1 5-6 0-4M12 16c-2 3 2 5 3 2" fill="none" stroke="#fff" strokeWidth="2" />
          </svg>
        </Task>
        <Task on>
          <svg viewBox="0 0 24 24" className="w-6 h-6">
            <path d="M21 3C12 1 4 6 5 14c1 6 8 9 12 6 3-3 1-7-3-7" fill="none" stroke="#e85a68" strokeWidth="5" />
            <path d="M22 4C15 2 9 5 9 11" fill="none" stroke="#2a8ad0" strokeWidth="3" />
          </svg>
        </Task>
        <Task on>
          <svg viewBox="0 0 24 24" className="w-6 h-6">
            <rect width="24" height="24" rx="3" fill="#f2a020" />
            <rect x="3" y="6" width="15" height="15" fill="#fdf2cf" transform="rotate(-8 10 13)" />
            <path d="M6 10h8M6 13h8M6 16h6" stroke="#999" />
            <path d="M13 18L21 2" stroke="#b03010" strokeWidth="2" />
          </svg>
        </Task>
        <Task on>
          <div className="flex items-center -translate-x-[1px]">
            <div className="w-[14px] h-[22px] mt-[5px] bg-white flex flex-col gap-[2px] px-[2px] pt-[4px]">
              <div className="h-px bg-[#888]" />
              <div className="h-px bg-[#888]" />
              <div className="h-px bg-[#888]" />
            </div>
            <span className="text-[#f6f000] text-[22px] font-bold leading-none -ml-[3px] -mt-[8px] font-['Liberation_Sans']">?</span>
          </div>
        </Task>
      </div>
      <div className="flex-1" />
      <div className="flex items-center text-white">
        <svg viewBox="0 0 12 7" className="w-[12px] h-[7px] mr-[12px]">
          <path d="M1 6l5-5 5 5" fill="none" stroke="#fff" />
        </svg>
        <svg viewBox="0 0 18 14" className="w-[17px] h-[14px] mr-[8px]">
          <rect x="4.500" y="3.500" width="13" height="9" fill="none" stroke="#eee" />
          <rect x="6" y="5" width="8" height="6" fill="#eee" />
          <path d="M2 0v4M0 6h4v2H0z" stroke="#eee" />
        </svg>
        <svg viewBox="0 0 16 16" className="w-4 h-4 mr-[7px]">
          <path d="M1 15A14 14 0 0 1 15 1M5 15A10 10 0 0 1 15 5M9 15a6 6 0 0 1 6-6" fill="none" stroke="#cfcfcf" strokeDasharray="1.500 1" />
        </svg>
        <svg viewBox="0 0 16 16" className="w-4 h-4 mr-[8px]">
          <path d="M1 5h3l4-4v14l-4-4H1z" fill="none" stroke="#eee" />
          <path d="M10 5c2 2 2 4 0 6M12 3c3 3 3 7 0 10" fill="none" stroke="#aaa" />
        </svg>
        <span className="text-[14px] font-bold mr-[11px]">中</span>
        <div className="w-[16px] h-[17px] rounded-[2px] bg-[#e9431a] rotate-6 flex items-center justify-center text-[14px] font-bold leading-none mr-[20px] font-['Liberation_Sans']">S</div>
        <div className="w-[54px] flex flex-col items-center text-[13px] leading-[19px] mr-[23px] text-[#e8e8e8]">
          <span>14:36</span>
          <span>2017/7/6</span>
        </div>
        <svg viewBox="0 0 16 17" className="w-4 h-[17px] mr-[25px]">
          <path d="M.5 .5h15v12h-5l-2.500 3-2.500-3h-5z" fill="none" stroke="#fff" />
        </svg>
      </div>
    </div>
  )
}

function Overlay() {
  return (
    <svg viewBox="0 0 1366 768" className="absolute left-0 top-0 w-[1366px] h-[768px] pointer-events-none">
      <ellipse cx="912" cy="132" rx="63" ry="33" transform="rotate(4 912 132)" fill="none" stroke="#f00" strokeWidth="3" />
      <ellipse cx="676" cy="371" rx="112" ry="36" fill="none" stroke="#f00" strokeWidth="3.500" />
    </svg>
  )
}

export default function App() {
  return (
    <div className="w-[1366px] h-[768px] relative overflow-hidden flex flex-col bg-[#f0f0f0] text-black text-[12px] font-['Liberation_Sans','Noto_Sans_CJK_SC',sans-serif]">
      <TitleBar />
      <MenuBar />
      <MainBar />
      <div className="h-[623px] flex">
        <Sidebar />
        <div className="w-[1126px] flex flex-col">
          <EditRow />
          <PropRow />
          <EmptyRow />
          <DrawRow />
          <div className="h-px" />
          <Canvas />
          <BottomRow />
        </div>
      </div>
      <StatusBar />
      <Taskbar />

      <Dialog />
      <Overlay />
      <Sogou />
      <div className="absolute left-[1182px] -top-[31px] w-[50px] h-[50px] rounded-full bg-[#3cb54a] border-[2px] border-[#8a9a8a] shadow-[0_2px_3px_rgba(0,0,0,.4)] flex items-end justify-center pb-[5px] text-white text-[13px] font-bold leading-none">
        71
      </div>
    </div>
  )
}
